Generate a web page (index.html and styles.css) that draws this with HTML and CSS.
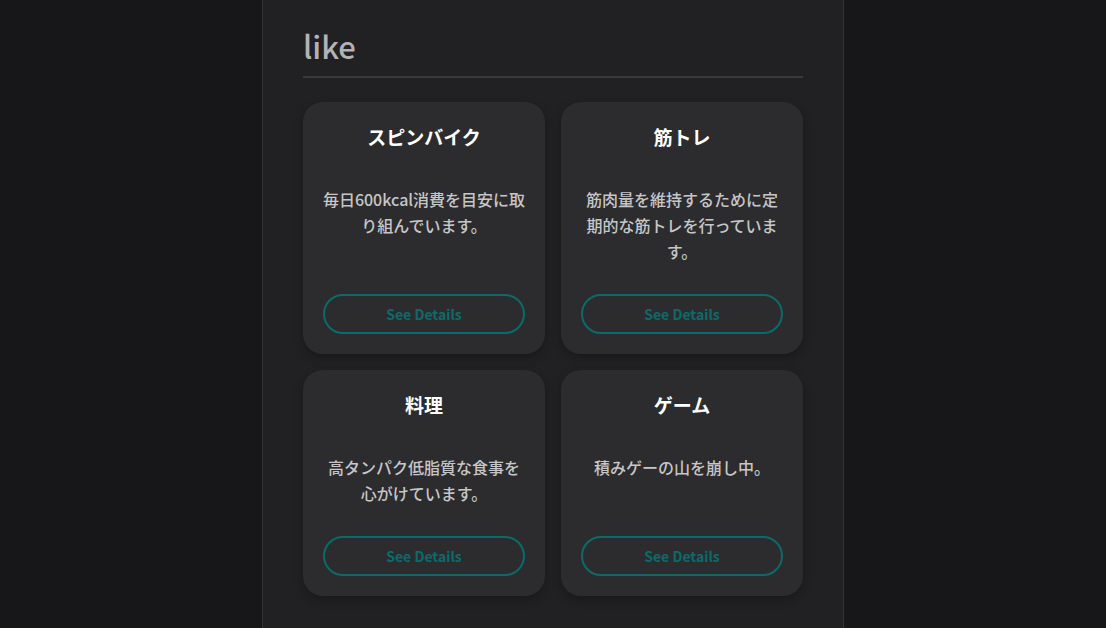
FILE: index.html
```html
<!DOCTYPE html>
<html lang="ja">
<head>
<meta charset="utf-8">
<title>like</title>
<link rel="stylesheet" href="styles.css">
</head>
<body>
<main class="column">
  <section class="likes">
    <h2 class="section-title">like</h2>
    <div class="grid">
      <article class="card">
        <h3 class="card-title">スピンバイク</h3>
        <p class="card-text">毎日600kcal消費を目安に取り組んでいます。</p>
        <button class="btn">See Details</button>
      </article>
      <article class="card">
        <h3 class="card-title">筋トレ</h3>
        <p class="card-text">筋肉量を維持するために定期的な筋トレを行っています。</p>
        <button class="btn">See Details</button>
      </article>
      <article class="card">
        <h3 class="card-title">料理</h3>
        <p class="card-text">高タンパク低脂質な食事を心がけています。</p>
        <button class="btn">See Details</button>
      </article>
      <article class="card">
        <h3 class="card-title">ゲーム</h3>
        <p class="card-text">積みゲーの山を崩し中。</p>
        <button class="btn">See Details</button>
      </article>
    </div>
  </section>
</main>
</body>
</html>
```
FILE: styles.css
```css
html, body {
  margin: 0;
  padding: 0;
  background: #17171a;
  font-family: "Noto Sans CJK JP", "Noto Sans", sans-serif;
}
.column {
  width: 500px;
  margin: 0 auto;
  min-height: 100vh;
  background: #212123;
  border-left: 1px solid #333336;
  border-right: 1px solid #333336;
  padding: 0 40px 40px;
  box-sizing: content-box;
}
.likes {
  padding-top: 24px;
}
.section-title {
  margin: 0 0 24px;
  font-size: 31px;
  line-height: 44px;
  font-weight: 500;
  color: #b3b3b5;
  padding-bottom: 8px;
  border-bottom: 2px solid #3a3a3c;
}
.grid {
  display: grid;
  grid-template-columns: 1fr 1fr;
  gap: 16px;
}
.card {
  background: #2c2c2e;
  border-radius: 20px;
  padding: 20px;
  display: flex;
  flex-direction: column;
  align-items: stretch;
  box-shadow: 0 4px 10px rgba(0, 0, 0, 0.25);
  text-align: center;
}
.card-title {
  margin: 0;
  font-size: 19px;
  line-height: 29px;
  font-weight: 700;
  color: #ffffff;
}
.card-text {
  margin: 35px -2px 30px;
  font-size: 16px;
  line-height: 26px;
  font-weight: 500;
  color: #c6c6c8;
}
.btn {
  margin-top: auto;
  height: 40px;
  border: 2px solid #0b6b6b;
  border-radius: 20px;
  background: transparent;
  color: #0b6b6b;
  font-family: inherit;
  font-size: 14px;
  font-weight: 700;
  cursor: pointer;
}
```
